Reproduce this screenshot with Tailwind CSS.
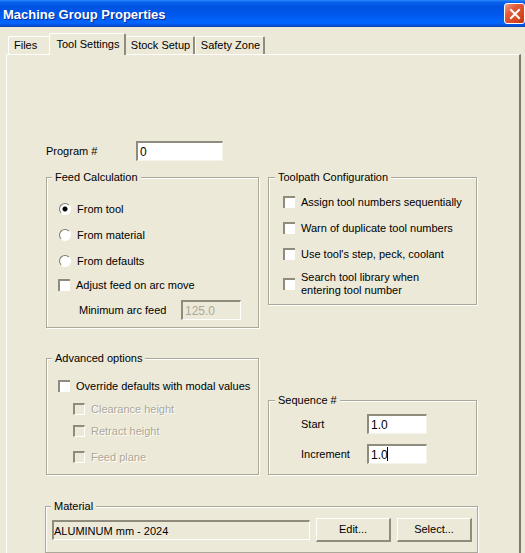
<!DOCTYPE html>
<html lang="en">
<head>
<meta charset="utf-8">
<title>Machine Group Properties</title>
<script src="https://cdn.jsdelivr.net/npm/@tailwindcss/browser@4"></script>
</head>
<body class="flex min-h-screen flex-col overflow-hidden bg-[#ece9d8] font-['Liberation_Sans',Arial,sans-serif] text-[11px] leading-[13px] text-black">
  <header class="flex h-[27px] shrink-0 items-center justify-between bg-[linear-gradient(#2a8cf8_0%,#0a62ee_8%,#0053e1_25%,#0058ee_55%,#0066ff_85%,#0a50d8_94%,#0840b0_100%)] pl-[3px]">
    <h1 class="pt-[2px] text-[13px] font-bold text-white [text-shadow:1px_1px_#0a2a90]">Machine Group Properties</h1>
    <button type="button" aria-label="Close" class="flex size-[21px] items-center justify-center rounded-[3px] border border-white bg-[linear-gradient(135deg,#f0a088_0%,#e25a38_35%,#d8441c_75%,#b83010_100%)]">
      <svg viewBox="0 0 12 12" class="size-[12px]" fill="none" stroke="#fff" stroke-width="2" stroke-linecap="square"><path d="M2 2l8 8M10 2l-8 8"/></svg>
    </button>
  </header>

  <main class="flex grow flex-col pt-[6px] pr-[4px] pl-[6px]">
    <div role="tablist" class="flex items-end pl-[2px]">
      <button type="button" role="tab" aria-selected="false" class="h-[18px] w-[41px] rounded-t-[2px] border-t border-l border-white pl-[5px] text-left">Files</button>
      <button type="button" role="tab" aria-selected="true" class="relative -mb-px h-[22px] w-[77px] rounded-t-[2px] border-t border-r-2 border-l border-t-white border-r-[#8f8c7e] border-l-white bg-[#ece9d8] pl-[2px]">Tool Settings</button>
      <button type="button" role="tab" aria-selected="false" class="h-[18px] w-[69px] rounded-t-[2px] border-t border-r-2 border-t-white border-r-[#8f8c7e] pl-[2px]">Stock Setup</button>
      <button type="button" role="tab" aria-selected="false" class="h-[18px] w-[70px] rounded-t-[2px] border-t border-r-2 border-l border-t-white border-r-[#8f8c7e] border-l-white pl-[2px]">Safety Zone</button>
    </div>

    <form class="grow border-t border-r-2 border-l border-t-white border-r-[#7d7a6c] border-l-white pr-[41px] pl-[38px]">
      <div class="flex items-center pt-[86px] pl-px">
        <label for="program" class="w-[90px]">Program #</label>
        <input id="program" type="text" value="0" class="h-[20px] w-[87px] border-t-2 border-r border-b border-l-2 border-t-[#8f8c7e] border-r-[#f6f4ea] border-b-[#f6f4ea] border-l-[#8f8c7e] bg-white px-[2px] text-[12px]">
      </div>

      <div class="grid grid-cols-[213fr_209fr] gap-x-[9px] px-px pt-[10px]">
        <fieldset class="min-w-0 border border-[#aca899] px-[11px] pb-[7px] shadow-[1px_1px_#fff,inset_1px_1px_#fff]">
          <legend class="-ml-[6px] bg-[#ece9d8] px-[3px]">Feed Calculation</legend>
          <div class="flex flex-col pt-[12px]">
            <label class="flex h-[26px] items-center gap-[6px]"><input type="radio" name="feed" checked class="ml-px size-[12px] appearance-none rounded-full border border-t-[#7d7a6c] border-r-white border-b-white border-l-[#7d7a6c] bg-white checked:bg-[radial-gradient(circle,#000_0_2px,#fff_3px)]">From tool</label>
            <label class="flex h-[26px] items-center gap-[6px]"><input type="radio" name="feed" class="ml-px size-[12px] appearance-none rounded-full border border-t-[#7d7a6c] border-r-white border-b-white border-l-[#7d7a6c] bg-white">From material</label>
            <label class="flex h-[26px] items-center gap-[6px]"><input type="radio" name="feed" class="ml-px size-[12px] appearance-none rounded-full border border-t-[#7d7a6c] border-r-white border-b-white border-l-[#7d7a6c] bg-white">From defaults</label>
            <label class="flex h-[22px] items-center gap-[6px]"><input type="checkbox" class="size-[12px] appearance-none border-t-2 border-l-2 border-[#8f8c7e] bg-white">Adjust feed on arc move</label>
            <div class="flex items-center pt-[4px] pl-[21px]">
              <label for="minfeed" class="w-[102px]">Minimum arc feed</label>
              <input id="minfeed" type="text" value="125.0" disabled class="h-[20px] w-[60px] border-t-2 border-r border-b border-l-2 border-t-[#8f8c7e] border-r-white border-b-white border-l-[#8f8c7e] px-[2px] text-[12px] text-[#aca899]">
            </div>
          </div>
        </fieldset>

        <fieldset class="min-w-0 self-start border border-[#aca899] px-[14px] pb-[7px] shadow-[1px_1px_#fff,inset_1px_1px_#fff]">
          <legend class="-ml-[8px] bg-[#ece9d8] px-[3px]">Toolpath Configuration</legend>
          <div class="flex flex-col pt-[5px] whitespace-nowrap">
            <label class="flex h-[26px] items-center gap-[6px]"><input type="checkbox" class="size-[12px] shrink-0 appearance-none border-t-2 border-l-2 border-[#8f8c7e] bg-white">Assign tool numbers sequentially</label>
            <label class="flex h-[26px] items-center gap-[6px]"><input type="checkbox" class="size-[12px] shrink-0 appearance-none border-t-2 border-l-2 border-[#8f8c7e] bg-white">Warn of duplicate tool numbers</label>
            <label class="flex h-[26px] items-center gap-[6px]"><input type="checkbox" class="size-[12px] shrink-0 appearance-none border-t-2 border-l-2 border-[#8f8c7e] bg-white">Use tool's step, peck, coolant</label>
            <label class="flex items-center gap-[6px] pt-[4px]"><input type="checkbox" class="size-[12px] shrink-0 appearance-none border-t-2 border-l-2 border-[#8f8c7e] bg-white"><span>Search tool library when<br>entering tool number</span></label>
          </div>
        </fieldset>
      </div>

      <div class="grid grid-cols-[213fr_209fr] items-end gap-x-[9px] px-px pt-[24px]">
        <fieldset class="min-w-0 border border-[#aca899] px-[11px] pb-[5px] shadow-[1px_1px_#fff,inset_1px_1px_#fff]">
          <legend class="-ml-[6px] bg-[#ece9d8] px-[3px]">Advanced options</legend>
          <div class="flex flex-col pt-[10px]">
            <label class="flex h-[22px] items-center gap-[6px] whitespace-nowrap"><input type="checkbox" class="size-[12px] shrink-0 appearance-none border-t-2 border-l-2 border-[#8f8c7e] bg-white">Override defaults with modal values</label>
            <div class="flex flex-col pl-[15px] text-[#aca899] [text-shadow:1px_1px_#fff]">
              <label class="flex h-[24px] items-center gap-[6px]"><input type="checkbox" disabled class="size-[12px] appearance-none border-t-2 border-r border-b border-l-2 border-t-[#8f8c7e] border-r-white border-b-white border-l-[#8f8c7e]">Clearance height</label>
              <label class="flex h-[20px] items-center gap-[6px]"><input type="checkbox" disabled class="size-[12px] appearance-none border-t-2 border-r border-b border-l-2 border-t-[#8f8c7e] border-r-white border-b-white border-l-[#8f8c7e]">Retract height</label>
              <label class="flex h-[28px] items-center gap-[6px] pt-[4px]"><input type="checkbox" disabled class="size-[12px] appearance-none border-t-2 border-r border-b border-l-2 border-t-[#8f8c7e] border-r-white border-b-white border-l-[#8f8c7e]">Feed plane</label>
            </div>
          </div>
        </fieldset>

        <fieldset class="min-w-0 border border-[#aca899] pr-[10px] pb-[10px] pl-[32px] shadow-[1px_1px_#fff,inset_1px_1px_#fff]">
          <legend class="-ml-[26px] bg-[#ece9d8] px-[3px]">Sequence #</legend>
          <div class="flex flex-col gap-[10px] pt-[7px]">
            <div class="flex items-center">
              <label for="start" class="w-[66px]">Start</label>
              <input id="start" type="text" value="1.0" class="h-[20px] w-[60px] border-t-2 border-r border-b border-l-2 border-t-[#8f8c7e] border-r-[#f6f4ea] border-b-[#f6f4ea] border-l-[#8f8c7e] bg-white px-[2px] text-[12px]">
            </div>
            <div class="flex items-center">
              <label for="increment" class="w-[66px]">Increment</label>
              <div class="relative flex">
                <input id="increment" type="text" value="1.0" class="h-[20px] w-[60px] border-t-2 border-r border-b border-l-2 border-t-[#8f8c7e] border-r-[#f6f4ea] border-b-[#f6f4ea] border-l-[#8f8c7e] bg-white px-[2px] text-[12px]">
                <span class="absolute top-[3px] left-[20px] h-[14px] w-px bg-black"></span>
              </div>
            </div>
          </div>
        </fieldset>
      </div>

      <fieldset class="mt-[25px] min-w-0 border border-[#aca899] pr-[5px] pb-[10px] pl-[6px] shadow-[1px_1px_#fff,inset_1px_1px_#fff]">
        <legend class="-ml-px bg-[#ece9d8] px-[3px]">Material</legend>
        <div class="flex items-center gap-[6px] pt-[5px]">
          <input type="text" aria-label="Material" readonly value="ALUMINUM mm - 2024" class="h-[20px] min-w-0 grow border-t-2 border-r border-b border-l-2 border-t-[#8f8c7e] border-r-white border-b-white border-l-[#8f8c7e]">
          <button type="button" class="h-[24px] w-[75px] border-t border-r-2 border-b-2 border-l border-t-white border-r-[#8f8c7e] border-b-[#8f8c7e] border-l-white">Edit...</button>
          <button type="button" class="h-[24px] w-[75px] border-t border-r-2 border-b-2 border-l border-t-white border-r-[#8f8c7e] border-b-[#8f8c7e] border-l-white">Select...</button>
        </div>
      </fieldset>
    </form>
  </main>
</body>
</html>
